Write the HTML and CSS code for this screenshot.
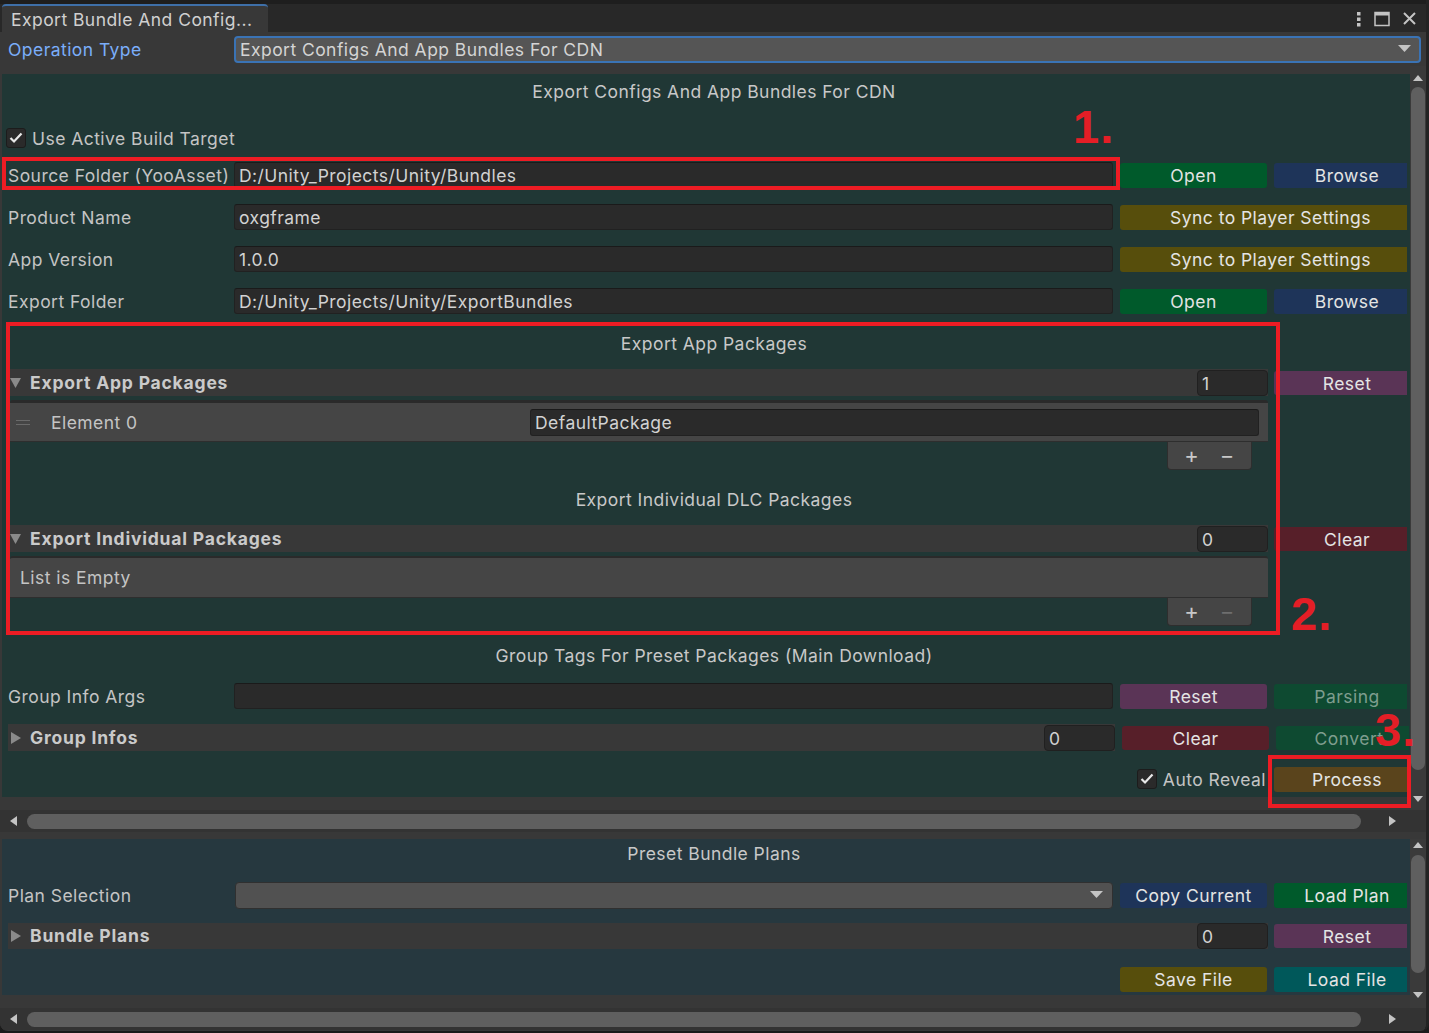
FILE: index.html
```html
<!DOCTYPE html>
<html>
<head>
<meta charset="utf-8">
<link rel="stylesheet" href="styles.css">
</head>
<body>
<div class="window">
  <div class="topstrip"></div>
  <div class="tabbar">
    <div class="tab">Export Bundle And Config...</div>
    <div class="tabicons">
      <svg width="6" height="16" viewBox="0 0 6 16"><rect x="1" y="1" width="3.5" height="3.5" fill="#c4c4c4"/><rect x="1" y="6.5" width="3.5" height="3.5" fill="#c4c4c4"/><rect x="1" y="12" width="3.5" height="3.5" fill="#c4c4c4"/></svg>
      <svg width="16" height="16" viewBox="0 0 16 16"><rect x="1" y="1.5" width="14" height="13" fill="none" stroke="#c4c4c4" stroke-width="1.5"/><rect x="1" y="1.5" width="14" height="3" fill="#c4c4c4"/></svg>
      <svg width="15" height="15" viewBox="0 0 15 15"><path d="M2 2 L13 13 M13 2 L2 13" stroke="#c4c4c4" stroke-width="2"/></svg>
    </div>
  </div>
  <div class="optype">
    <div class="label blue">Operation Type</div>
    <div class="dropdown focused">
      <span>Export Configs And App Bundles For CDN</span>
      <svg class="ddarrow" width="13" height="8" viewBox="0 0 13 8"><polygon points="0,0 13,0 6.5,7" fill="#c4c4c4"/></svg>
    </div>
  </div>

  <div class="scrollview sv-top">
    <div class="sv-body">
      <div class="sv-col">
        <div class="content teal">
          <div class="header h-first">Export Configs And App Bundles For CDN</div>
          <div class="checkrow">
            <span class="checkbox"><svg width="14" height="12" viewBox="0 0 14 12"><polyline points="1.5,6 5,9.5 12.5,1.5" fill="none" stroke="#e8e8e8" stroke-width="2.2"/></svg></span>
            <span>Use Active Build Target</span>
          </div>
          <div class="row r-source">
            <div class="label">Source Folder (YooAsset)</div>
            <div class="field">D:/Unity_Projects/Unity/Bundles</div>
            <div class="btn b1 green">Open</div>
            <div class="btn b2 navy">Browse</div>
          </div>
          <div class="row">
            <div class="label">Product Name</div>
            <div class="field">oxgframe</div>
            <div class="btn bwide olive">Sync to Player Settings</div>
          </div>
          <div class="row">
            <div class="label">App Version</div>
            <div class="field">1.0.0</div>
            <div class="btn bwide olive">Sync to Player Settings</div>
          </div>
          <div class="row">
            <div class="label">Export Folder</div>
            <div class="field">D:/Unity_Projects/Unity/ExportBundles</div>
            <div class="btn b1 green">Open</div>
            <div class="btn b2 navy">Browse</div>
          </div>

          <div class="header h-sec">Export App Packages</div>
          <div class="barrow">
            <div class="bar">
              <svg class="tri" width="11" height="10" viewBox="0 0 11 10"><polygon points="0,0 11,0 5.5,10" fill="#8a8a8a"/></svg>
              <span class="bartitle">Export App Packages</span>
              <div class="size">1</div>
            </div>
            <div class="btn b2 purple">Reset</div>
          </div>
          <div class="list">
            <div class="element">
              <span class="handle"></span>
              <span class="elabel">Element 0</span>
              <div class="field efield">DefaultPackage</div>
            </div>
          </div>
          <div class="footer-wrap"><div class="footer"><span>+</span><span>−</span></div></div>

          <div class="header h-sec">Export Individual DLC Packages</div>
          <div class="barrow">
            <div class="bar">
              <svg class="tri" width="11" height="10" viewBox="0 0 11 10"><polygon points="0,0 11,0 5.5,10" fill="#8a8a8a"/></svg>
              <span class="bartitle">Export Individual Packages</span>
              <div class="size">0</div>
            </div>
            <div class="btn b2 red">Clear</div>
          </div>
          <div class="list list-empty">List is Empty</div>
          <div class="footer-wrap"><div class="footer"><span>+</span><span class="dim">−</span></div></div>

          <div class="header h-sec">Group Tags For Preset Packages (Main Download)</div>
          <div class="row r-args">
            <div class="label">Group Info Args</div>
            <div class="field"></div>
            <div class="btn b1 purple">Reset</div>
            <div class="btn b2 dimgreen">Parsing</div>
          </div>
          <div class="barrow r-ginfo">
            <div class="bar bar-short">
              <svg class="tri" width="11" height="12" viewBox="0 0 11 12"><polygon points="1,0 11,6 1,12" fill="#8a8a8a"/></svg>
              <span class="bartitle">Group Infos</span>
              <div class="size">0</div>
            </div>
            <div class="btn b1 red">Clear</div>
            <div class="btn b2 dimgreen">Convert</div>
          </div>
          <div class="row r-auto">
            <span class="checkbox"><svg width="14" height="12" viewBox="0 0 14 12"><polyline points="1.5,6 5,9.5 12.5,1.5" fill="none" stroke="#e8e8e8" stroke-width="2.2"/></svg></span>
            <span class="autolabel">Auto Reveal</span>
            <div class="btn b2 brown">Process</div>
          </div>
        </div>
      </div>
      <div class="vscroll vs-top">
        <svg class="arr" width="10" height="6" viewBox="0 0 10 6"><polygon points="0,6 10,6 5,0" fill="#c4c4c4"/></svg>
        <div class="thumb"></div>
        <svg class="arr" width="10" height="6" viewBox="0 0 10 6"><polygon points="0,0 10,0 5,6" fill="#c4c4c4"/></svg>
      </div>
    </div>
    <div class="hscroll">
      <svg width="7" height="10" viewBox="0 0 7 10"><polygon points="7,0 7,10 0,5" fill="#c4c4c4"/></svg>
      <div class="hthumb"></div>
      <svg width="7" height="10" viewBox="0 0 7 10"><polygon points="0,0 0,10 7,5" fill="#c4c4c4"/></svg>
    </div>
  </div>

  <div class="scrollview sv-bottom">
    <div class="sv-body">
      <div class="sv-col">
        <div class="content blueish">
          <div class="header h-plan">Preset Bundle Plans</div>
          <div class="row r-plan">
            <div class="label">Plan Selection</div>
            <div class="dropdown plain">
              <span></span>
              <svg class="ddarrow" width="13" height="8" viewBox="0 0 13 8"><polygon points="0,0 13,0 6.5,7" fill="#c4c4c4"/></svg>
            </div>
            <div class="btn b1 navy">Copy Current</div>
            <div class="btn b2 green">Load Plan</div>
          </div>
          <div class="barrow r-bplans">
            <div class="bar">
              <svg class="tri" width="11" height="12" viewBox="0 0 11 12"><polygon points="1,0 11,6 1,12" fill="#8a8a8a"/></svg>
              <span class="bartitle">Bundle Plans</span>
              <div class="size">0</div>
            </div>
            <div class="btn b2 purple">Reset</div>
          </div>
          <div class="row r-files">
            <div class="btn b1 olive">Save File</div>
            <div class="btn b2 teal-btn">Load File</div>
          </div>
        </div>
      </div>
      <div class="vscroll vs-bottom">
        <svg class="arr" width="10" height="6" viewBox="0 0 10 6"><polygon points="0,6 10,6 5,0" fill="#c4c4c4"/></svg>
        <div class="thumb"></div>
        <svg class="arr" width="10" height="6" viewBox="0 0 10 6"><polygon points="0,0 10,0 5,6" fill="#c4c4c4"/></svg>
      </div>
    </div>
    <div class="hscroll">
      <svg width="7" height="10" viewBox="0 0 7 10"><polygon points="7,0 7,10 0,5" fill="#c4c4c4"/></svg>
      <div class="hthumb"></div>
      <svg width="7" height="10" viewBox="0 0 7 10"><polygon points="0,0 0,10 7,5" fill="#c4c4c4"/></svg>
    </div>
  </div>

  <div class="annot box box1"></div>
  <div class="annot num num1">1.</div>
  <div class="annot box box2"></div>
  <div class="annot num num2">2.</div>
  <div class="annot box box3"></div>
  <div class="annot num num3">3.</div>
</div>
</body>
</html>
```

FILE: styles.css
```css
* { box-sizing: border-box; margin: 0; padding: 0; }
html, body { width: 1429px; height: 1033px; overflow: hidden; }
body {
  background: #1b1b1b;
  font-family: Inter, "Noto Sans", sans-serif;
  font-size: 17.5px;
  letter-spacing: 0.45px;
  color: #c4c4c4;
}
.window {
  position: relative;
  width: 1429px;
  height: 1031px;
  display: flex;
  flex-direction: column;
  background: #383838;
  border-right: 3px solid #232323;
  border-radius: 0 0 8px 8px;
  overflow: hidden;
}
.topstrip { height: 4px; background: #1e1e1e; flex: none; }
.tabbar {
  height: 28px;
  flex: none;
  background: #282828;
  display: flex;
  align-items: stretch;
  justify-content: space-between;
  padding-left: 2px;
}
.tab {
  width: 266px;
  background: #383838;
  border-top: 2px solid #3e6fa8;
  border-radius: 4px 4px 0 0;
  padding-left: 9px;
  line-height: 27px;
  color: #d0d0d0;
  white-space: nowrap;
}
.tabicons {
  display: flex;
  align-items: center;
  gap: 12px;
  padding-right: 9px;
  padding-top: 1px;
}
.optype {
  height: 34px;
  flex: none;
  display: flex;
  align-items: center;
  padding: 0 5px 0 8px;
}
.label { width: 226px; flex: none; white-space: nowrap; }
.blue { color: #7baefa; }
.dropdown {
  flex: 1;
  height: 27px;
  background: #555555;
  border-radius: 4px;
  display: flex;
  align-items: center;
  justify-content: space-between;
  padding: 0 8px 0 5px;
  color: #d4d4d4;
  line-height: 25px;
}
.dropdown.focused { border: 2px solid #3a73b5; padding-left: 4px; }
.dropdown.plain { border: 1px solid #303030; background: #515151; margin-left: 1px; padding-right: 9px; }

.scrollview { display: flex; flex-direction: column; flex: none; }
.sv-top { height: 773px; }
.sv-bottom { height: 191px; }
.sv-body { display: flex; flex: 1; }
.sv-col { width: 1408px; margin-left: 2px; display: flex; flex-direction: column; }
.sv-top .sv-col { padding-top: 8px; padding-bottom: 13px; }
.sv-bottom .sv-col { padding-bottom: 13px; }
.content { flex: 1; display: flex; flex-direction: column; overflow: hidden; }
.teal { background: #203735; }
.blueish { background: #26383f; }

.vscroll {
  width: 16px;
  display: flex;
  flex-direction: column;
  align-items: center;
  background: #3a3a3a;
}
.vscroll .thumb {
  width: 14px;
  background: #5f5f5f;
  border-radius: 7px;
  flex: 1;
}
.vs-top { padding: 9px 0 8px; }
.vs-top .thumb { margin: 6px 0 26px; }
.vs-bottom { padding: 3px 0 10px; height: 169px; }
.vs-bottom .thumb { margin: 7px 0 19px; }

.hscroll {
  height: 22px;
  flex: none;
  display: flex;
  align-items: center;
  gap: 10px;
  padding: 0 30px 0 10px;
  background: #333333;
}
.sv-top .hscroll { margin-bottom: 7px; }
.hthumb { flex: 1; height: 15px; background: #5f5f5f; border-radius: 8px; margin-right: 18px; }

.header {
  text-align: center;
  padding-left: 16px;
  flex: none;
  color: #c8c8c8;
  white-space: nowrap;
}
.h-first { height: 34px; line-height: 36px; }
.h-sec { height: 34px; line-height: 35px; margin-top: 12px; }
.h-plan { height: 28px; line-height: 29px; }

.checkrow {
  height: 26px;
  margin-top: 17px;
  display: flex;
  align-items: center;
  padding-left: 4px;
  gap: 6px;
  flex: none;
}
.checkbox {
  width: 20px;
  height: 20px;
  background: #2a2a2a;
  border: 1px solid #1c1c1c;
  border-radius: 3px;
  display: flex;
  align-items: center;
  justify-content: center;
  flex: none;
}
.row {
  height: 26px;
  margin-top: 16px;
  display: flex;
  align-items: center;
  gap: 7px;
  padding: 0 3px 0 6px;
  flex: none;
  line-height: 27px;
}
.row .label { width: 219px; }
.r-source { margin-top: 11px; }
.field {
  flex: 1;
  height: 26px;
  background: #2a2a2a;
  border: 1px solid #212121;
  border-top-color: #1a1a1a;
  border-radius: 3px;
  padding-left: 4px;
  line-height: 25px;
  color: #d2d2d2;
  white-space: nowrap;
}
.btn {
  height: 25px;
  border-radius: 3px 0 0 3px;
  text-align: center;
  line-height: 26px;
  color: #e4e4e4;
  flex: none;
  white-space: nowrap;
}
.b1 { width: 147px; border-radius: 3px; }
.b2 { width: 133px; padding-left: 13px; }
.bwide { width: 287px; padding-left: 14px; }
.green { background: #005a2b; }
.navy { background: #1e3459; }
.olive { background: #574e0c; }
.purple { background: #5a3456; }
.red { background: #571f29; }
.dimgreen { background: #0e4a31; color: #7e9d8e; }
.brown { background: #5a441c; }
.teal-btn { background: #00585a; }

.barrow {
  height: 27px;
  margin-top: 9px;
  display: flex;
  align-items: center;
  gap: 6px;
  padding: 0 3px 0 6px;
  flex: none;
}
.bar {
  flex: 1;
  height: 27px;
  background: #383838;
  display: flex;
  align-items: center;
  padding-left: 2px;
}
.bar .tri { margin-right: 9px; }
.bartitle { font-weight: 700; color: #cacaca; flex: 1; letter-spacing: 0.8px; line-height: 28px; }
.size {
  width: 71px;
  height: 26px;
  background: #2a2a2a;
  border: 1px solid #202020;
  border-radius: 4px;
  padding-left: 4px;
  line-height: 25px;
  color: #d2d2d2;
}
.barrow .btn { height: 24px; line-height: 25px; }
.r-ginfo { margin-top: 15px; gap: 7px; padding-left: 6px; }
.bar-short { flex: none; width: 1107px; }
.r-bplans { margin-top: 15px; height: 26px; }
.r-bplans .bar { height: 26px; }

.list {
  margin: 4px 0 0 8px;
  width: 1258px;
  background: #454545;
  border-top: 3px solid #2a2a2a;
  border-bottom: 1px solid #2e2e2e;
  border-radius: 3px 3px 0 0;
  flex: none;
}
.element {
  height: 38px;
  display: flex;
  align-items: center;
  padding-right: 9px;
}
.handle {
  width: 14px;
  height: 5px;
  border-top: 1px solid #6a6a6a;
  border-bottom: 1px solid #6a6a6a;
  margin: 0 21px 0 6px;
}
.elabel { width: 479px; }
.efield { height: 27px; line-height: 26px; }
.list-empty {
  height: 42px;
  border-top-width: 2px;
  padding-left: 10px;
  line-height: 39px;
}
.footer-wrap { height: 28px; flex: none; display: flex; justify-content: flex-end; padding-right: 158px; }
.footer {
  width: 85px;
  height: 28px;
  background: #454545;
  border: 1px solid #2e2e2e;
  border-top: none;
  border-radius: 0 0 4px 4px;
  display: flex;
  justify-content: space-around;
  align-items: center;
  padding: 0 6px 2px;
  font-size: 22px;
  color: #c8c8c8;
}
.footer .dim { color: #6e6e6e; }
.r-args { margin-top: 11px; }
.r-auto { margin-top: 15px; justify-content: flex-end; gap: 0; }
.r-auto .checkbox { margin-right: 6px; }
.autolabel { margin-right: 8px; }
.r-plan { margin-top: 15px; }
.r-files { margin-top: 17px; justify-content: flex-end; }

.annot { position: absolute; }
.box { border: 4px solid #ed1c24; }
.box1 { left: 2px; top: 157px; width: 1118px; height: 33px; }
.box2 { left: 6px; top: 322px; width: 1274px; height: 313px; }
.box3 { left: 1268px; top: 755px; width: 143px; height: 53px; }
.num {
  font-family: "Liberation Sans", Arial, sans-serif;
  font-weight: 700;
  font-size: 47px;
  line-height: 47px;
  color: #e41e26;
  letter-spacing: 1px;
}
.num1 { left: 1073px; top: 103px; }
.num2 { left: 1291px; top: 590px; }
.num3 { left: 1375px; top: 706px; }
```
